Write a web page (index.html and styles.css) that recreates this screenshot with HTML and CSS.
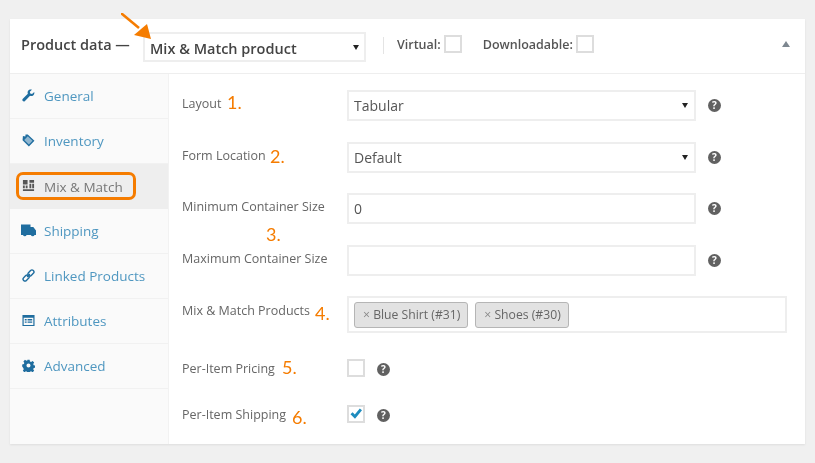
FILE: index.html
```html
<!DOCTYPE html>
<html lang="en">
<head>
    <meta charset="UTF-8">
    <meta name="viewport" content="width=device-width, initial-scale=1.0">
    <title>Product data</title>
    <link rel="stylesheet" href="styles.css">
</head>
<body>
    <div class="panel">
        <div class="panel-head">
            <span class="panel-title">Product data —</span>
            <div class="select-wrap head-select">
                <select class="select"><option>Mix &amp; Match product</option></select>
            </div>
            <span class="head-sep"></span>
            <label class="head-check">Virtual: <input type="checkbox" class="check"></label>
            <label class="head-check downloadable">Downloadable: <input type="checkbox" class="check"></label>
            <span class="collapse"></span>
        </div>
        <div class="panel-body">
            <ul class="tabs">
                <li class="tab">
                    <svg class="tab-icon" viewBox="0 0 14 14"><path d="M13.2 3.2 10.8 5.4 8.9 4.9 8.4 3 10.7.7C9 .2 7.4.7 6.6 1.9 5.9 3 5.9 4.2 6.3 5.1L.9 10.6C.2 11.3.2 12.3.9 12.9 1.5 13.5 2.5 13.5 3.2 12.8L8.7 7.4C9.7 7.8 11 7.7 12 6.9 13.1 6 13.5 4.6 13.2 3.2Z"/></svg>
                    General
                </li>
                <li class="tab">
                    <svg class="tab-icon" viewBox="0 0 14 14"><path d="M6.2.6 13.4 7.2 7.4 13.4.6 6.8 1 2.2 3.6 2.6 3.8.6Z"/><path class="tab-icon-lt" d="M6.2 2.4 11.4 7.2 7.4 11.4 2.4 6.4Z"/></svg>
                    Inventory
                </li>
                <li class="tab tab-active">
                    <svg class="tab-icon" viewBox="0 0 14 14"><path d="M1 1h5v5H1zM8 1h5v3H8zM8 5h2v5H8zM11 5h2v5h-2zM1 7h2v3H1zM4 7h2v3H4zM1 11h12v2H1z"/></svg>
                    Mix &amp; Match
                </li>
                <li class="tab">
                    <svg class="tab-icon tab-icon-wide" viewBox="0 0 15 13"><path d="M0 .5h9.500v2.500h2.800L15 6.500v4.500h-1.500a1.900 1.900 0 0 1-3.600 0H5.600a1.900 1.900 0 0 1-3.600 0H0Z"/></svg>
                    Shipping
                </li>
                <li class="tab">
                    <svg class="tab-icon" viewBox="0 0 14 14"><g class="tab-icon-line"><rect x="5.900" y="2.200" width="7.400" height="4.200" rx="2.100" transform="rotate(-45 9.600 4.300)"/><rect x="0.700" y="7.600" width="7.400" height="4.200" rx="2.100" transform="rotate(-45 4.400 9.700)"/><path d="M5.500 8.500 8.500 5.500"/></g></svg>
                    Linked Products
                </li>
                <li class="tab">
                    <svg class="tab-icon" viewBox="0 0 14 14"><path fill-rule="evenodd" d="M.5 1h13v12H.5ZM1.800 4v7.800h10.400V4ZM3 5.500h2v1.400H3ZM6 5.500h5v1.400H6ZM3 8h2v1.400H3ZM6 8h5v1.400H6Z"/></svg>
                    Attributes
                </li>
                <li class="tab">
                    <svg class="tab-icon" viewBox="0 0 14 14"><path fill-rule="evenodd" d="M5.800.8h2.400l.4 1.800 1.200.5 1.600-1 1.700 1.700-1 1.600.5 1.200 1.800.4v2.400l-1.800.4-.5 1.200 1 1.600-1.700 1.700-1.600-1-1.200.5-.4 1.800H5.800l-.4-1.800-1.200-.5-1.600 1-1.700-1.700 1-1.600-.5-1.200L.2 8.200V5.800l1.800-.4.500-1.200-1-1.600 1.700-1.700 1.600 1 1.200-.5ZM7 4.800a2.200 2.200 0 1 0 0 4.400 2.200 2.200 0 0 0 0-4.400Z"/></svg>
                    Advanced
                </li>
            </ul>
            <div class="fields">
                <div class="row">
                    <span class="row-label">Layout</span>
                    <div class="select-wrap"><select class="select"><option>Tabular</option></select></div>
                    <span class="help">?</span>
                </div>
                <div class="row">
                    <span class="row-label">Form Location</span>
                    <div class="select-wrap"><select class="select"><option>Default</option></select></div>
                    <span class="help">?</span>
                </div>
                <div class="row">
                    <span class="row-label">Minimum Container Size</span>
                    <input class="text-input" type="text" value="0">
                    <span class="help">?</span>
                </div>
                <div class="row">
                    <span class="row-label">Maximum Container Size</span>
                    <input class="text-input" type="text">
                    <span class="help">?</span>
                </div>
                <div class="row row-products">
                    <span class="row-label">Mix &amp; Match Products</span>
                    <div class="token-box">
                        <span class="token"><span class="token-x">×</span> Blue Shirt (#31)</span>
                        <span class="token"><span class="token-x">×</span> Shoes (#30)</span>
                    </div>
                </div>
                <div class="row row-check">
                    <span class="row-label">Per-Item Pricing</span>
                    <input type="checkbox" class="check">
                    <span class="help">?</span>
                </div>
                <div class="row row-check row-last">
                    <span class="row-label">Per-Item Shipping</span>
                    <span class="check check-on">
                        <svg viewBox="0 0 16 16"><path d="M2.500 8.200 4.600 6.200 6.800 8.400 11.800 2.400 14 4.200 7 12.800Z"/></svg>
                    </span>
                    <span class="help">?</span>
                </div>
            </div>
        </div>
    </div>

    <!-- annotations drawn over the screenshot -->
    <svg class="arrow" viewBox="0 0 40 40"><path d="M0 0 18 15" class="arrow-line"/><path d="M30 26 13 22 26 11Z" class="arrow-head"/></svg>
    <span class="tab-ring"></span>
    <span class="num num1">1.</span>
    <span class="num num2">2.</span>
    <span class="num num3">3.</span>
    <span class="num num4">4.</span>
    <span class="num num5">5.</span>
    <span class="num num6">6.</span>
</body>
</html>
```

FILE: styles.css
```css
* {
    box-sizing: border-box;
}
body {
    margin: 0;
    height: 463px;
    padding: 19px 10px 0;
    background-color: #f0f0f0;
    font-family: "Open Sans", sans-serif;
    color: #555;
    position: relative;
    overflow: hidden;
}
.panel {
    width: 795px;
    height: 425px;
    background-color: #fff;
    box-shadow: 0 1px 2px rgba(0, 0, 0, 0.08);
    display: flex;
    flex-direction: column;
    filter: blur(0.45px);
}
.panel-head {
    height: 55px;
    flex-shrink: 0;
    padding: 13px 0 0 11px;
    display: flex;
    align-items: flex-start;
    border-bottom: 1px solid #eee;
}
.panel-title {
    font-size: 14.5px;
    font-weight: 600;
    color: #444;
    line-height: 26px;
    width: 122px;
    white-space: nowrap;
}
.select-wrap {
    position: relative;
    width: 349px;
    height: 31px;
}
.select-wrap::after {
    content: "";
    position: absolute;
    right: 8px;
    top: 13px;
    border-left: 3.5px solid transparent;
    border-right: 3.5px solid transparent;
    border-top: 5px solid #222;
}
.select {
    appearance: none;
    width: 100%;
    height: 100%;
    padding: 0 0 0 5px;
    border: 2px solid #eee;
    border-radius: 0;
    background: #fff;
    font-family: inherit;
    font-size: 14px;
    color: #555;
}
.head-select {
    width: 223px;
    height: 30px;
}
.head-select::after {
    right: 7px;
}
.head-select .select {
    padding-top: 2px;
    font-size: 14.5px;
    font-weight: 600;
    color: #444;
}
.head-sep {
    width: 1px;
    height: 17px;
    margin: 5px 13px 0 17px;
    background-color: #e4e4e4;
}
.head-check {
    display: flex;
    align-items: center;
    gap: 3px;
    height: 18px;
    margin-top: 3px;
    font-size: 12.5px;
    font-weight: 600;
    color: #555;
}
.downloadable {
    margin-left: 21px;
}
.collapse {
    margin: 9px 0 0 188px;
    border-left: 4.5px solid transparent;
    border-right: 4.5px solid transparent;
    border-bottom: 6px solid #7d8790;
}
.panel-body {
    flex: 1;
    display: flex;
}
.tabs {
    width: 159px;
    margin: 0;
    padding: 0;
    list-style: none;
    background-color: #fafafa;
    border-right: 1px solid #f2f2f2;
}
.tab {
    height: 45px;
    padding-left: 12px;
    display: flex;
    align-items: center;
    gap: 9px;
    border-bottom: 1px solid #f1f1f1;
    font-size: 13.5px;
    color: #4f97c0;
}
.tab-icon {
    width: 13px;
    height: 13px;
    margin-top: -2px;
    fill: #1f6d9f;
    flex-shrink: 0;
}
.tab-icon-wide {
    width: 15px;
    margin-left: -1px;
    margin-right: -1px;
}
.tab-icon-lt {
    fill: #8fb6d0;
}
.tab-icon-line {
    fill: none;
    stroke: #1f6d9f;
    stroke-width: 1.500;
}
.tab-active {
    background-color: #eee;
    color: #777;
    border-bottom: 0;
}
.tab-active .tab-icon {
    fill: #555;
}
.fields {
    flex: 1;
    padding: 16px 0 0 13px;
    display: flex;
    flex-direction: column;
    gap: 20.5px;
}
.row {
    display: flex;
    align-items: center;
    height: 31px;
}
.row-label {
    width: 165px;
    flex-shrink: 0;
    margin-top: -4px;
    font-size: 12.5px;
    color: #666;
}
.text-input {
    width: 349px;
    height: 31px;
    padding: 0 5px;
    border: 2px solid #eee;
    font-family: inherit;
    font-size: 14px;
    color: #555;
    outline: none;
}
.help {
    width: 13px;
    height: 13px;
    margin-left: 12px;
    border-radius: 50%;
    background-color: #616161;
    color: #fff;
    font-size: 10px;
    font-weight: 700;
    line-height: 13px;
    text-align: center;
}
.row-products {
    height: 37px;
}
.row-products .row-label {
    margin-top: -9px;
}
.token-box {
    width: 440px;
    height: 37px;
    padding: 4px 5px;
    border: 2px solid #eee;
    display: flex;
    gap: 7px;
}
.token {
    height: 26px;
    padding: 0 7px 0 8px;
    border: 1px solid #b5b5b5;
    border-radius: 3px;
    background-color: #e2e2e2;
    font-size: 12.2px;
    line-height: 24px;
    color: #666;
}
.token-x {
    color: #888;
}
.row-check {
    height: 18px;
    margin-top: 5px;
}
.row-check .row-label {
    margin-top: 1px;
}
.row-check .help {
    margin: 3px 0 0 12px;
}
.row-last {
    margin-top: 8px;
}
.check {
    appearance: none;
    width: 18px;
    height: 18px;
    margin: 0;
    flex-shrink: 0;
    border: 2px solid #ddd;
    background-color: #fff;
    display: block;
}
.check-on svg {
    width: 16px;
    height: 16px;
    margin: -1px;
    display: block;
    fill: #1e8cbe;
}
.arrow {
    position: absolute;
    left: 121px;
    top: 13px;
    width: 40px;
    height: 40px;
    filter: blur(0.4px);
}
.arrow-line {
    stroke: #f57c00;
    stroke-width: 2.500;
}
.arrow-head {
    fill: #f57c00;
}
.tab-ring {
    position: absolute;
    left: 16px;
    top: 172px;
    width: 120px;
    height: 28px;
    border: 3px solid #f57c00;
    border-radius: 7px;
    filter: blur(0.4px);
}
.num {
    position: absolute;
    font-family: Lato, sans-serif;
    font-size: 18px;
    line-height: 18px;
    color: #f57c00;
    filter: blur(0.3px);
}
.num1 {
    left: 227px;
    top: 93px;
}
.num2 {
    left: 270px;
    top: 147px;
}
.num3 {
    left: 266px;
    top: 225px;
}
.num4 {
    left: 315px;
    top: 304px;
}
.num5 {
    left: 282px;
    top: 358px;
}
.num6 {
    left: 292px;
    top: 408px;
}
```
